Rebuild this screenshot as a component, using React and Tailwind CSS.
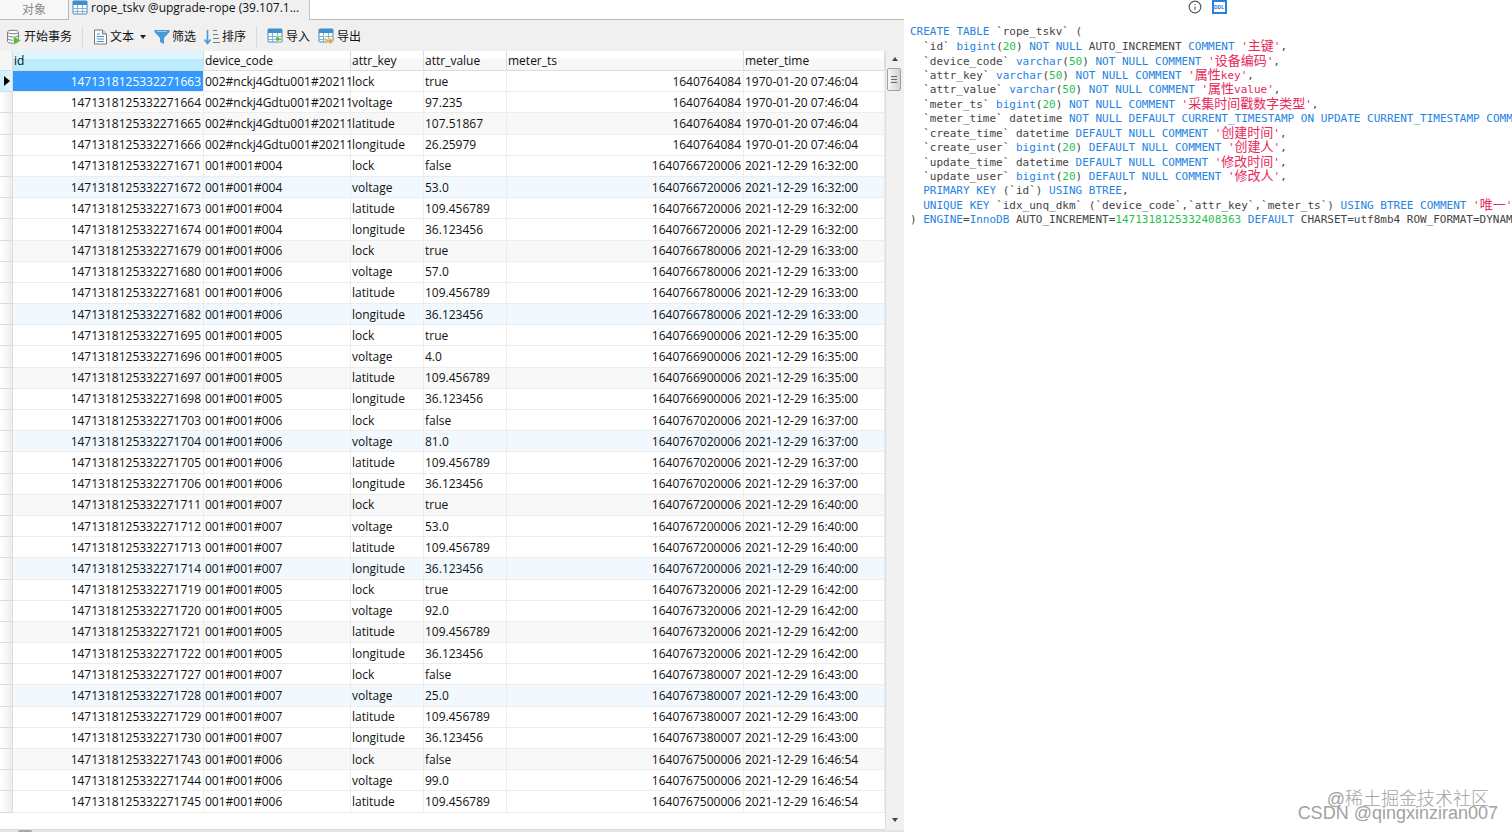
import clsx from 'clsx';
import { Info } from 'lucide-react';

const COLUMNS = [
  { key: 'id', width: 'w-[191px]', right: true },
  { key: 'device_code', width: 'w-[147px]' },
  { key: 'attr_key', width: 'w-[73px]' },
  { key: 'attr_value', width: 'w-[83px]' },
  { key: 'meter_ts', width: 'w-[237px]', right: true },
  { key: 'meter_time', width: '' },
];

const KEYS = ['lock', 'voltage', 'latitude', 'longitude'];

// one entry per report: first id suffix, device, values in KEYS order, timestamp, time
const REPORTS = [
  { id: 663, device: '002#nckj4Gdtu001#20211', values: ['true', '97.235', '107.51867', '26.25979'], ts: '1640764084', time: '1970-01-20 07:46:04' },
  { id: 671, device: '001#001#004', values: ['false', '53.0', '109.456789', '36.123456'], ts: '1640766720006', time: '2021-12-29 16:32:00' },
  { id: 679, device: '001#001#006', values: ['true', '57.0', '109.456789', '36.123456'], ts: '1640766780006', time: '2021-12-29 16:33:00' },
  { id: 695, device: '001#001#005', values: ['true', '4.0', '109.456789', '36.123456'], ts: '1640766900006', time: '2021-12-29 16:35:00' },
  { id: 703, device: '001#001#006', values: ['false', '81.0', '109.456789', '36.123456'], ts: '1640767020006', time: '2021-12-29 16:37:00' },
  { id: 711, device: '001#001#007', values: ['true', '53.0', '109.456789', '36.123456'], ts: '1640767200006', time: '2021-12-29 16:40:00' },
  { id: 719, device: '001#001#005', values: ['true', '92.0', '109.456789', '36.123456'], ts: '1640767320006', time: '2021-12-29 16:42:00' },
  { id: 727, device: '001#001#007', values: ['false', '25.0', '109.456789', '36.123456'], ts: '1640767380007', time: '2021-12-29 16:43:00' },
  { id: 743, device: '001#001#006', values: ['false', '99.0', '109.456789'], ts: '1640767500006', time: '2021-12-29 16:46:54' },
];

const ROWS = REPORTS.flatMap(r =>
  r.values.map((value, i) => ({
    id: `1471318125332271${r.id + i}`,
    device_code: r.device,
    attr_key: KEYS[i],
    attr_value: value,
    meter_ts: r.ts,
    meter_time: r.time,
  }))
);

const DDL = [
  'CREATE TABLE `rope_tskv` (',
  "  `id` bigint(20) NOT NULL AUTO_INCREMENT COMMENT '主键',",
  "  `device_code` varchar(50) NOT NULL COMMENT '设备编码',",
  "  `attr_key` varchar(50) NOT NULL COMMENT '属性key',",
  "  `attr_value` varchar(50) NOT NULL COMMENT '属性value',",
  "  `meter_ts` bigint(20) NOT NULL COMMENT '采集时间戳数字类型',",
  '  `meter_time` datetime NOT NULL DEFAULT CURRENT_TIMESTAMP ON UPDATE CURRENT_TIMESTAMP COMMENT',
  "  `create_time` datetime DEFAULT NULL COMMENT '创建时间',",
  "  `create_user` bigint(20) DEFAULT NULL COMMENT '创建人',",
  "  `update_time` datetime DEFAULT NULL COMMENT '修改时间',",
  "  `update_user` bigint(20) DEFAULT NULL COMMENT '修改人',",
  '  PRIMARY KEY (`id`) USING BTREE,',
  "  UNIQUE KEY `idx_unq_dkm` (`device_code`,`attr_key`,`meter_ts`) USING BTREE COMMENT '唯一'",
  ') ENGINE=InnoDB AUTO_INCREMENT=1471318125332408363 DEFAULT CHARSET=utf8mb4 ROW_FORMAT=DYNAMIC',
];

const TOKEN = /(`[^`]*`|'[^']*'|\b\d+\b|\b(?:CREATE|TABLE|bigint|varchar|NOT|NULL|COMMENT|DEFAULT|CURRENT_TIMESTAMP|ON|UPDATE|PRIMARY|UNIQUE|KEY|USING|BTREE|ENGINE|InnoDB)\b)/;

function tokenClass(t) {
  if (t[0] === '`') return '';
  if (t[0] === "'") return 'text-[#e8285a]';
  if (/^\d+$/.test(t)) return 'text-[#1fc24f]';
  return 'text-[#2583e4]';
}

// Chinese glyphs are drawn two columns wide
function withCjk(text) {
  return text.split(/([\u4e00-\u9fff]+)/).map((s, i) => (i % 2 ? <span key={i} className="text-[13px]">{s}</span> : s));
}

function SqlLine({ line }) {
  return (
    <span className="flex items-center whitespace-pre">
      <span>{line.split(TOKEN).map((t, i) => (i % 2 ? <span key={i} className={tokenClass(t)}>{withCjk(t)}</span> : t))}</span>
    </span>
  );
}

function TableIcon({ children }) {
  return (
    <svg viewBox="0 0 17 17" className="w-[17px] h-[17px] shrink-0">
      <rect x="1" y="1" width="14" height="13" rx="1" fill="#fff" stroke="#4a86b8" />
      <path d="M1 1h14v4H1z" fill="#3f8fcd" />
      <path d="M1 8.500h14M1 11.500h14M5.500 5v9M10.500 5v9" stroke="#7fb2d8" fill="none" />
      {children}
    </svg>
  );
}

function TransactionIcon() {
  return (
    <svg viewBox="0 0 16 16" className="w-4 h-4 shrink-0" fill="#fff" stroke="#7b8083">
      <path d="M1.500 3v9.500c0 1 2.500 1.800 5.500 1.800s5.500-.8 5.500-1.800V3" />
      <ellipse cx="7" cy="3" rx="5.500" ry="1.800" />
      <path d="M1.500 6.200C1.500 7.200 4 8 7 8s5.500-.8 5.500-1.800M1.500 9.400c0 1 2.500 1.800 5.500 1.800" fill="none" />
      <path d="M7.500 7v9l7.500-4.500z" fill="#54bb35" stroke="#f0f0f0" strokeWidth=".6" />
    </svg>
  );
}

function TextIcon() {
  return (
    <svg viewBox="0 0 15 16" className="w-[15px] h-4 shrink-0">
      <path d="M1.500 1h8l4 4v10h-12z" fill="#fff" stroke="#6d7880" />
      <path d="M9.500 1v4h4" fill="#d5dde2" stroke="#6d7880" />
      <path d="M4 5h3M4 7.500h7M4 10h7M4 12.500h7" stroke="#3d91cf" />
    </svg>
  );
}

function FilterIcon() {
  return (
    <svg viewBox="0 0 16 16" className="w-4 h-4 shrink-0">
      <path d="M.5 1h15v2L10 9v6l-4-2V9L.5 3z" fill="#4799d7" />
      <path d="M3 2.500h10" stroke="#9dceef" />
    </svg>
  );
}

function SortIcon() {
  return (
    <svg viewBox="0 0 16 16" className="w-4 h-4 shrink-0" fill="none">
      <path d="M3.500 1v12M.5 10.500l3 4 3-4" stroke="#4799d7" strokeWidth="1.600" />
      <path d="M9 1.500h4M9 5.500h5M9 9.500h6M9 13.500h7" stroke="#777d82" />
    </svg>
  );
}

function ToolButton({ icon, label, caret }) {
  return (
    <button type="button" className="flex items-center gap-[2px] whitespace-nowrap">
      {icon}
      <span>{label}</span>
      {caret && <svg viewBox="0 0 6 4" className="w-[6px] h-1 ml-1"><path d="M0 0h6L3 4z" fill="#222" /></svg>}
    </button>
  );
}

function Separator() {
  return <span className="w-px h-[22px] bg-[#d9d9d9]" />;
}

function TabBar() {
  return (
    <nav className="flex h-5 leading-4 bg-white overflow-hidden">
      <button type="button" className="w-[69px] bg-[#f8f8f8] border-r border-b border-[#b9b9b9] text-[#8a8a8a]">对象</button>
      <button type="button" className="w-[241px] flex items-center gap-[2px] pl-[3px] pb-1 bg-[#f0f0f0] border-r border-[#c4c4c4] whitespace-nowrap">
        <TableIcon />
        rope_tskv @upgrade-rope (39.107.1...
      </button>
      <span className="flex-1 border-b border-[#b9b9b9]" />
    </nav>
  );
}

function Toolbar() {
  return (
    <div className="flex items-center h-[31px] pl-[6px] pt-[2px] gap-[10px]">
      <ToolButton icon={<TransactionIcon />} label="开始事务" />
      <Separator />
      <div className="flex items-center gap-2">
        <ToolButton icon={<TextIcon />} label="文本" caret />
        <ToolButton icon={<FilterIcon />} label="筛选" />
        <ToolButton icon={<SortIcon />} label="排序" />
      </div>
      <Separator />
      <div className="flex items-center gap-2">
        <ToolButton label="导入" icon={<TableIcon><path d="M16 16c0-3-1.500-4-4-4v2.500L7.500 11 12 7.500V10c3 0 5 2 4 6z" fill="#57b63a" stroke="#f0f0f0" strokeWidth=".7" /></TableIcon>} />
        <ToolButton label="导出" icon={<TableIcon><path d="M7 7.500c0 3 1.500 4.500 4 4.500V9.500l5 3.800-5 3.500v-2.500c-3 0-5.500-2.500-4-6.800z" fill="#f5a21b" stroke="#f0f0f0" strokeWidth=".7" /></TableIcon>} />
      </div>
    </div>
  );
}

function DataGrid() {
  return (
    <div className="flex-1 min-w-0 bg-white border-b border-r border-[#dedede] pb-4">
      <table className="w-full h-full table-fixed border-separate border-spacing-0 text-left">
        <colgroup>
          <col className="w-[13px]" />
          {COLUMNS.map(c => <col key={c.key} className={c.width} />)}
        </colgroup>
        <thead>
          <tr className="h-[20px]">
            <th aria-label="row" className="bg-[#f6f6f6] border-r border-b border-[#dcdcdc]" />
            {COLUMNS.map((c, i) => (
              <th key={c.key} className={clsx('pl-px pr-[2px] font-normal border-r border-b border-[#dcdcdc] bg-linear-to-b',
                i === 0 ? 'from-[#def5fe] from-40% to-[#bcebfd] to-40%' : 'from-white from-40% to-[#f6f7f8] to-40%')}>
                {c.key}
              </th>
            ))}
          </tr>
        </thead>
        <tbody>
          {ROWS.map((row, r) => (
            <tr key={row.id} className={clsx(r % 6 === 2 && 'bg-[#f8f8f8]', r % 6 === 5 && 'bg-[#f2f9fe]')}>
              <td className={clsx('border-r border-b border-[#dcdcdc] bg-linear-to-r', r === 0 ? 'from-[#c9effd] to-[#e2f6fd]' : 'from-white to-[#ededed]')}>
                {r === 0 && <svg viewBox="0 0 6 10" className="w-[6px] h-[10px] ml-[4px]"><path d="M0 0l6 5-6 5z" fill="#000" /></svg>}
              </td>
              {COLUMNS.map((c, i) => (
                <td key={c.key} className={clsx('pl-px pr-[2px] border-r border-b border-[#ededed] whitespace-nowrap',
                  c.right && 'text-right', r === 0 && i === 0 && 'bg-[#3399ff] text-white')}>
                  {row[c.key]}
                </td>
              ))}
            </tr>
          ))}
        </tbody>
      </table>
    </div>
  );
}

function Scrollbar() {
  return (
    <div className="w-[18px] flex flex-col items-center bg-[#f0f0f0] pt-[6px] pb-2">
      <svg viewBox="0 0 6 4" className="w-[6px] h-1"><path d="M0 4h6L3 0z" fill="#444" /></svg>
      <div className="mt-[7px] mr-[2px] w-[14px] h-[23px] rounded-[2px] border border-[#a0a0a0] bg-linear-to-r from-[#f7f7f7] to-[#d2d2d2] flex flex-col items-center justify-center gap-[2px]">
        <span className="w-[6px] h-px bg-[#666]" />
        <span className="w-[6px] h-px bg-[#666]" />
        <span className="w-[6px] h-px bg-[#666]" />
      </div>
      <svg viewBox="0 0 6 4" className="w-[6px] h-1 mt-auto"><path d="M0 0h6L3 4z" fill="#444" /></svg>
    </div>
  );
}

function DdlPanel() {
  return (
    <section className="min-w-0 overflow-hidden bg-white">
      <div className="flex justify-center gap-[10px] h-[25px] pr-[2px]">
        <button type="button" aria-label="Info" className="h-[14px]"><Info size={14} strokeWidth={2} className="text-[#555]" /></button>
        <button type="button" className="w-[15px] h-[14px] border-2 border-[#2b80dd] text-[#2b80dd] font-bold text-[5px] leading-[9px]">DDL</button>
      </div>
      <code className="grid auto-rows-fr h-[202px] pl-[6px] text-[11px] leading-[14px] text-[#444] font-['DejaVu_Sans_Mono','Noto_Sans_CJK_SC',monospace]">
        {DDL.map((line, i) => <SqlLine key={i} line={line} />)}
      </code>
    </section>
  );
}

export default function App() {
  return (
    <div className="relative h-screen overflow-hidden grid grid-cols-[113fr_76fr] bg-white text-[12px] leading-[15px] text-[#111] font-['Open_Sans','Noto_Sans_CJK_SC',sans-serif]">
      <main className="min-w-0 flex flex-col bg-[#f0f0f0]">
        <TabBar />
        <Toolbar />
        <div className="flex-1 min-h-0 flex">
          <DataGrid />
          <Scrollbar />
        </div>
        <div className="h-[2px] bg-[#e4e4e4] pl-[18px]">
          <span className="block w-[14px] h-[2px] bg-[#a8a8a8] rounded-t" />
        </div>
      </main>
      <DdlPanel />
      <p className="absolute right-[23px] bottom-[22px] text-[18px] leading-[22px] font-light text-[#a2a2a2] font-['Liberation_Sans','Noto_Sans_CJK_SC',sans-serif]">@稀土掘金技术社区</p>
      <p className="absolute right-[14px] bottom-[8px] text-[18px] leading-[22px] text-[#a2a2a2] font-['Liberation_Sans',sans-serif]">CSDN @qingxinziran007</p>
    </div>
  );
}
